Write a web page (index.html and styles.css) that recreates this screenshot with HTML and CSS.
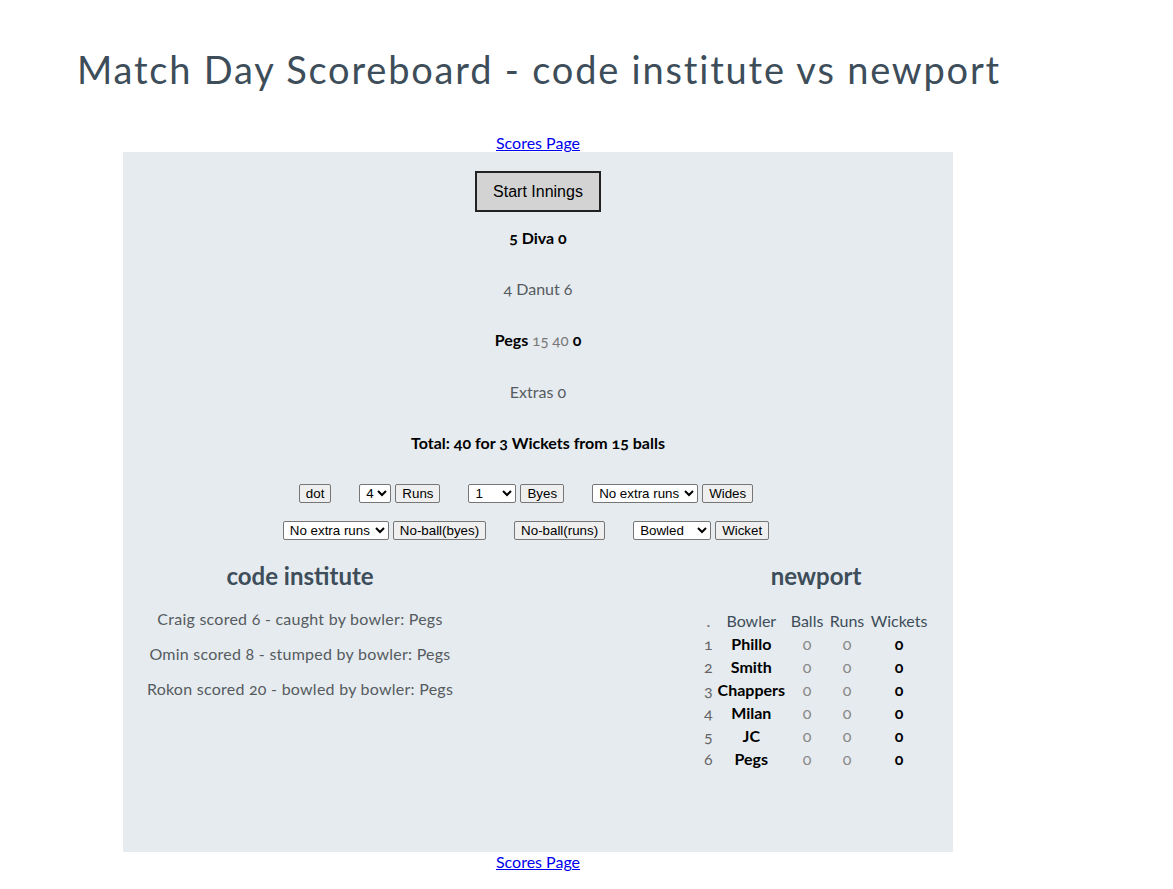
FILE: index.html
```html
<!DOCTYPE html>
<html lang="en">
<head>
<meta charset="utf-8">
<title>Match Day Scoreboard</title>
<link rel="stylesheet" href="styles.css">
</head>
<body>
<h1 class="title">Match Day Scoreboard - code institute vs newport</h1>
<div class="nav"><a href="#" class="nav-link">Scores Page</a></div>
<main class="board">
  <div class="start-wrap"><button class="start">Start Innings</button></div>
  <p class="line strong">5 Diva 0</p>
  <p class="line">4 Danut 6</p>
  <p class="line"><b class="dark">Pegs</b> <span class="small">15 40</span> <b class="dark">0</b></p>
  <p class="line">Extras 0</p>
  <p class="line strong">Total: 40 for 3 Wickets from 15 balls</p>

  <div class="controls">
    <div class="group"><button class="ctl">dot</button></div>
    <div class="group">
      <select class="sel sel-4"><option>4</option></select>
      <button class="ctl">Runs</button>
    </div>
    <div class="group">
      <select class="sel sel-1"><option>1</option></select>
      <button class="ctl">Byes</button>
    </div>
    <div class="group">
      <select class="sel sel-extra"><option>No extra runs</option></select>
      <button class="ctl">Wides</button>
    </div>
  </div>
  <div class="controls">
    <div class="group">
      <select class="sel sel-extra"><option>No extra runs</option></select>
      <button class="ctl">No-ball(byes)</button>
    </div>
    <div class="group"><button class="ctl">No-ball(runs)</button></div>
    <div class="group">
      <select class="sel sel-how"><option>Bowled</option></select>
      <button class="ctl">Wicket</button>
    </div>
  </div>

  <div class="teams">
    <section class="team team-bat">
      <h2 class="team-name">code institute</h2>
      <p class="out">Craig scored 6 - caught by bowler: Pegs</p>
      <p class="out">Omin scored 8 - stumped by bowler: Pegs</p>
      <p class="out">Rokon scored 20 - bowled by bowler: Pegs</p>
    </section>
    <section class="team team-bowl">
      <h2 class="team-name">newport</h2>
      <table class="bowlers">
        <thead>
          <tr><th class="num">.</th><th>Bowler</th><th>Balls</th><th>Runs</th><th>Wickets</th></tr>
        </thead>
        <tbody>
          <tr><td class="num">1</td><td class="name">Phillo</td><td class="stat">0</td><td class="stat">0</td><td class="wk">0</td></tr>
          <tr><td class="num">2</td><td class="name">Smith</td><td class="stat">0</td><td class="stat">0</td><td class="wk">0</td></tr>
          <tr><td class="num">3</td><td class="name">Chappers</td><td class="stat">0</td><td class="stat">0</td><td class="wk">0</td></tr>
          <tr><td class="num">4</td><td class="name">Milan</td><td class="stat">0</td><td class="stat">0</td><td class="wk">0</td></tr>
          <tr><td class="num">5</td><td class="name">JC</td><td class="stat">0</td><td class="stat">0</td><td class="wk">0</td></tr>
          <tr><td class="num">6</td><td class="name">Pegs</td><td class="stat">0</td><td class="stat">0</td><td class="wk">0</td></tr>
        </tbody>
      </table>
    </section>
  </div>
</main>
<div class="nav"><a href="#" class="nav-link">Scores Page</a></div>
</body>
</html>
```

FILE: styles.css
```css
body {
  margin: 8px;
  font-family: Lato, "Open Sans", sans-serif;
  font-variant-numeric: oldstyle-nums;
  color: #555b60;
  background: #fff;
}

.title {
  margin: 39px 0 0 69px;
  font-size: 38px;
  font-weight: 400;
  letter-spacing: 1.8px;
  line-height: 44px;
  color: #3d4d59;
}

.nav {
  width: 830px;
  margin-left: 115px;
  text-align: center;
  font-size: 16px;
  line-height: 19px;
}

.nav:first-of-type { margin-top: 42px; }

.nav-link { color: #0000ee; }

.board {
  width: 830px;
  height: 700px;
  margin-left: 115px;
  background: #e6ebef;
  box-sizing: border-box;
  padding-top: 19px;
}

.start-wrap {
  display: flex;
  justify-content: center;
}

.start {
  font-family: "Liberation Sans", Arial, sans-serif;
  font-size: 16px;
  background: #d3d3d3;
  border: 2px solid #222;
  color: #000;
  width: 126px;
  height: 41px;
  padding: 0;
}

.line {
  margin: 16px 0 32px;
  line-height: 19px;
  font-size: 16px;
  text-align: center;
}

.line + .line { margin-top: 0; }

.strong { font-weight: 700; color: #000; }

.dark { color: #000; }

.small { font-size: 15px; color: #777; }

.controls {
  display: flex;
  justify-content: center;
  gap: 28px;
  padding-right: 24px;
  margin-top: 18px;
}

.controls:first-of-type { margin-top: 0; }

.group {
  display: flex;
  gap: 4px;
  align-items: center;
}

.ctl, .sel {
  font-family: "Liberation Sans", Arial, sans-serif;
  font-size: 13.33px;
  height: 19px;
  box-sizing: border-box;
  color: #000;
  border: 1px solid #767676;
  border-radius: 2px;
  margin: 0;
}

.ctl {
  background: #efefef;
  padding: 0 6px;
}

.sel {
  background: #fff;
  padding: 0 0 0 2px;
}

.sel-4 { width: 32px; }
.sel-1 { width: 48px; }
.sel-extra { width: 106px; }
.sel-how { width: 78px; }

.teams {
  display: flex;
  justify-content: space-between;
  margin-top: 21px;
}

.team-bat { width: 354px; }
.team-bowl { width: 274px; }

.team-name {
  margin: 0 0 19px;
  text-align: center;
  font-size: 24px;
  line-height: 29px;
  font-weight: 700;
  color: #3d4d59;
}

.out {
  margin: 0 0 16px;
  text-align: center;
  font-size: 16px;
  line-height: 19px;
  letter-spacing: 0.25px;
}

.bowlers {
  margin: 0 auto;
  border-spacing: 0;
  margin-top: 15px;
  font-size: 16px;
}

.bowlers th, .bowlers td {
  padding: 2px 2px 1px;
  line-height: 20px;
  text-align: center;
}

.bowlers th {
  font-weight: 400;
  color: #3d4d59;
}

.bowlers .num { color: #666; padding: 0 3px; }
.bowlers .name { color: #000; font-weight: 700; }
.bowlers .stat { color: #888; width: 36px; }
.bowlers .wk { color: #000; font-weight: 700; width: 60px; }
```
